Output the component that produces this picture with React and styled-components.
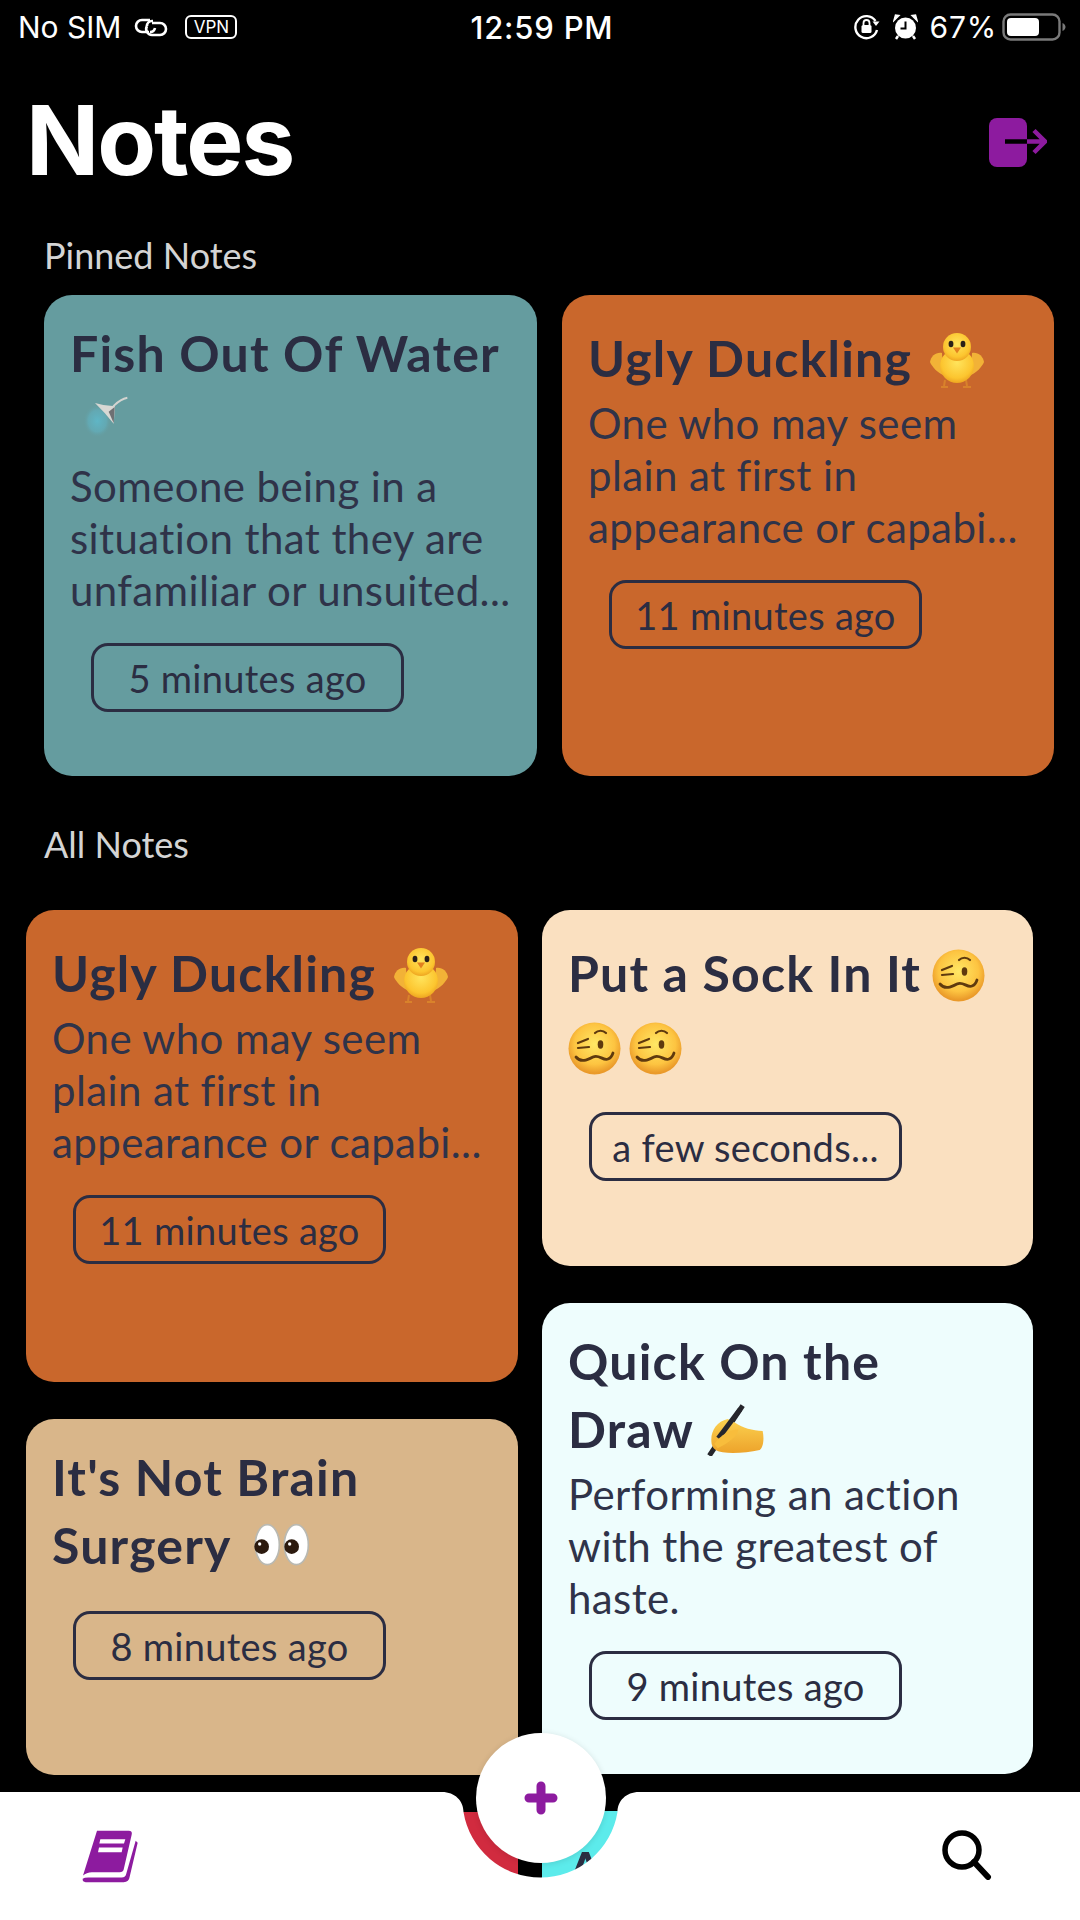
import React from 'react';
import styled, { createGlobalStyle } from 'styled-components';

const GlobalStyle = createGlobalStyle`
  html, body {
    margin: 0;
    padding: 0;
    background: #000;
  }
  * {
    box-sizing: border-box;
  }
`;

const Page = styled.div`
  position: relative;
  width: 1080px;
  height: 1920px;
  overflow: hidden;
  background: #000;
  font-family: Lato, 'Open Sans', sans-serif;
  color: #2b2d42;
`;

const StatusBar = styled.div`
  display: grid;
  grid-template-columns: 1fr auto 1fr;
  align-items: center;
  height: 54px;
  padding: 0 14px 0 18px;
  font-family: Inter, 'Liberation Sans', sans-serif;
  font-size: 30px;
  color: #fff;
`;

const StatusGroup = styled.div`
  display: flex;
  align-items: center;
  justify-content: ${props => (props.$end ? 'flex-end' : 'flex-start')};
  gap: 12px;
`;

const Percent = styled.span`
  margin-right: -7px;
  letter-spacing: 0.8px;
`;

const Time = styled.div`
  font-size: 31px;
  font-weight: 500;
  letter-spacing: 0.8px;
`;

const VpnBox = styled.span`
  display: inline-flex;
  align-items: center;
  justify-content: center;
  width: 52px;
  height: 24px;
  margin-left: 4px;
  border: 2px solid #fff;
  border-radius: 6px;
  font-size: 17px;
`;

const Header = styled.div`
  display: flex;
  align-items: center;
  justify-content: space-between;
  height: 116px;
  padding: 0 33px 0 26px;
  margin-top: 28px;
`;

const Heading = styled.h1`
  margin: 0;
  font-family: Inter, 'Liberation Sans', sans-serif;
  font-size: 96px;
  font-weight: 700;
  letter-spacing: -2px;
  color: #fff;
`;

const LogoutButton = styled.div`
  display: flex;
  margin-top: 6px;
`;

const SectionLabel = styled.div`
  height: 44px;
  line-height: 44px;
  margin: ${props => props.$margin};
  padding-left: 44px;
  font-size: 36px;
  color: #d4d4d4;
`;

const PinnedRow = styled.div`
  display: grid;
  grid-template-columns: 493px 492px;
  gap: 25px;
  padding-left: 44px;
`;

const Masonry = styled.div`
  display: grid;
  grid-template-columns: 492px 491px;
  gap: 24px;
  padding-left: 26px;
`;

const Column = styled.div`
  display: flex;
  flex-direction: column;
  gap: 37px;
`;

const Card = styled.div`
  min-height: ${props => props.$height}px;
  padding: 29px 22px 0 26px;
  border-radius: 28px;
  background: ${props => props.$color};
`;

const Title = styled.div`
  font-size: 50px;
  font-weight: 700;
  line-height: 58px;
  letter-spacing: 1.2px;
  color: #2b2d42;
`;

const Body = styled.div`
  font-size: 42px;
  line-height: 52px;
  letter-spacing: 0.4px;
  color: #2f3349;
`;

const TimePill = styled.div`
  display: flex;
  align-items: center;
  justify-content: center;
  width: 313px;
  height: 69px;
  margin: 27px 0 0 21px;
  border: 3px solid #2b2d42;
  border-radius: 17px;
  font-size: 38px;
  letter-spacing: 0.3px;
  white-space: nowrap;
`;

// sized box so a line with an emoji in it gets the taller line box of the app
const EmojiSlot = styled.span`
  display: inline-block;
  overflow: hidden;
  height: ${props => props.$line || 73}px;
  margin: ${props => props.$margin || '0'};
  font-size: 0;
  line-height: ${props => props.$line || 73}px;
  vertical-align: -20px;

  svg {
    vertical-align: middle;
  }
`;

const TabBar = styled.div`
  position: absolute;
  left: 0;
  right: 0;
  bottom: 0;
  display: flex;
  justify-content: space-between;
  height: 128px;
  padding: 38px 88px 0 82px;
`;

const BarShape = styled.svg`
  position: absolute;
  left: 0;
  top: 0;
  width: 1080px;
  height: 128px;
`;

const TabIcon = styled.svg`
  position: relative;
  display: block;
`;

const Fab = styled.button`
  position: absolute;
  left: 476px;
  bottom: 57px;
  display: flex;
  align-items: center;
  justify-content: center;
  width: 130px;
  height: 130px;
  padding: 0;
  border: 0;
  border-radius: 50%;
  background: #fff;
  box-shadow: 0 1px 6px rgba(0, 0, 0, 0.12);
`;

const PURPLE = '#8d1b9f';

const LinkIcon = () => (
  <svg width="36" height="22" viewBox="0 0 36 22" fill="none" stroke="#fff" strokeWidth="2.6">
    <path d="M17 4H9a6 6 0 0 0 0 12h7" />
    <path d="M14 10a5 5 0 0 1 5-5h1" />
    <path d="M19 7h8a6 6 0 0 1 0 12h-8a6 6 0 0 1-5-9" />
    <path d="M22 12a5 5 0 0 1-5 4" />
  </svg>
);

const RotationLockIcon = () => (
  <svg width="28" height="26" viewBox="0 0 28 26" fill="none">
    <path d="M22.5 7A11 11 0 1 0 24 16" stroke="#fff" strokeWidth="2.4" />
    <path d="M19.5 7.5h7l-3.5 4.5z" fill="#fff" />
    <rect x="8.5" y="11" width="10" height="8" rx="1.5" fill="#fff" />
    <path d="M10.5 11V9a3 3 0 0 1 6 0v2" stroke="#fff" strokeWidth="1.8" />
  </svg>
);

const AlarmIcon = () => (
  <svg width="25" height="26" viewBox="0 0 25 26">
    <circle cx="12.5" cy="14" r="10.5" fill="#fff" />
    <path d="M1 6.5 6 1.5 2.500 1z M24 6.500 19 1.500 22.500 1z" fill="#fff" stroke="#fff" strokeWidth="1.500" />
    <path d="M12.5 7.500V14.500H7.500" fill="none" stroke="#000" strokeWidth="2" />
    <path d="M5 22 3 25M20 22l2 3" stroke="#fff" strokeWidth="2.500" />
  </svg>
);

const BatteryIcon = () => (
  <svg width="64" height="28" viewBox="0 0 64 28">
    <rect x="1.500" y="1.500" width="56" height="25" rx="7" fill="none" stroke="#7a7a7a" strokeWidth="2.400" />
    <rect x="5" y="5" width="32" height="18" rx="4" fill="#fff" />
    <path d="M60.500 10c2 1 3 2.500 3 4s-1 3-3 4z" fill="#7a7a7a" />
  </svg>
);

const LogoutIcon = () => (
  <svg width="58" height="50" viewBox="0 0 58 50" fill="none">
    <rect x="0" y="0" width="38" height="49" rx="8" fill={PURPLE} />
    <path d="M16 23.500H38" stroke="#000" strokeWidth="4.500" />
    <path d="M38 23.500H54M45 12.500 56 23.500 45 34.500" stroke={PURPLE} strokeWidth="4.500" />
  </svg>
);

const Chick = () => (
  <svg width="54" height="56" viewBox="0 0 54 56">
    <defs>
      <radialGradient id="chickBody" cx="50%" cy="40%" r="65%">
        <stop offset="0%" stopColor="#ffe45c" />
        <stop offset="70%" stopColor="#fcc52f" />
        <stop offset="100%" stopColor="#e99a1c" />
      </radialGradient>
    </defs>
    <path d="M15 48l-1 6M11 55h7M36 48l1 6M33 55h8" stroke="#d9822b" strokeWidth="2" fill="none" />
    <path d="M12 21C6 20 1 24 0 30c2 5 8 11 13 13z" fill="#f2b237" />
    <path d="M42 21c6-1 11 3 12 9-2 5-8 11-13 13z" fill="#f2b237" />
    <ellipse cx="27" cy="34" rx="17" ry="17" fill="url(#chickBody)" />
    <circle cx="27" cy="15" r="14" fill="url(#chickBody)" />
    <ellipse cx="21" cy="12" rx="2.400" ry="3.200" fill="#2a2018" />
    <ellipse cx="33" cy="12" rx="2.400" ry="3.200" fill="#2a2018" />
    <path d="M23 15.500h8l-4 6z" fill="#e2811f" />
  </svg>
);

const Woozy = () => (
  <svg width="53" height="53" viewBox="0 0 53 53" fill="none">
    <defs>
      <radialGradient id="woozyFace" cx="50%" cy="42%" r="55%">
        <stop offset="0%" stopColor="#ffe865" />
        <stop offset="70%" stopColor="#fdc441" />
        <stop offset="100%" stopColor="#ea9a2a" />
      </radialGradient>
    </defs>
    <circle cx="26.500" cy="26.500" r="26" fill="url(#woozyFace)" />
    <path d="M10 21l10-4M10 26l11-1" stroke="#5f3a0e" strokeWidth="2.200" strokeLinecap="round" />
    <ellipse cx="32.500" cy="22.500" rx="2.800" ry="4.200" fill="#5f3a0e" />
    <path d="M27 11c3-3 8-3 11 0" stroke="#5f3a0e" strokeWidth="2.200" strokeLinecap="round" />
    <path d="M8 35c5 6 11 3 17 0s10 4 15 2c3-1 4-3 5-6" stroke="#5f3a0e" strokeWidth="2.800" strokeLinecap="round" />
  </svg>
);

const WritingHand = () => (
  <svg width="60" height="54" viewBox="75 10 180 160" fill="none">
    <defs>
      <linearGradient id="handSkin" x1="0" y1="0" x2="0" y2="1">
        <stop offset="0%" stopColor="#fcd250" />
        <stop offset="100%" stopColor="#eda32b" />
      </linearGradient>
    </defs>
    <path d="M185 20 L85 170" stroke="#26262c" strokeWidth="15" />
    <path d="M92 135C86 100 105 68 140 60L160 70C185 88 215 95 245 96C250 120 247 145 236 153C200 160 160 165 125 160C105 156 96 150 92 135Z" fill="url(#handSkin)" />
    <path d="M178 30 L112 118" stroke="#26262c" strokeWidth="15" />
    <path d="M100 135C120 105 155 90 172 92C170 112 140 132 110 148Z" fill="#f8bd3c" />
  </svg>
);

const Eyes = () => (
  <svg width="56" height="50" viewBox="45 40 168 130">
    <ellipse cx="85" cy="104" rx="36" ry="60" fill="#fff" stroke="#b9b9b2" strokeWidth="5" />
    <ellipse cx="172" cy="104" rx="36" ry="60" fill="#fff" stroke="#b9b9b2" strokeWidth="5" />
    <circle cx="68" cy="110" r="22" fill="#2c1a0e" />
    <circle cx="158" cy="110" r="22" fill="#2c1a0e" />
    <circle cx="62" cy="102" r="5" fill="#fff" />
    <circle cx="152" cy="102" r="5" fill="#fff" />
  </svg>
);

const FishSpray = () => (
  <svg width="70" height="60" viewBox="0 0 210 180">
    <defs>
      <radialGradient id="sprayFade" cx="50%" cy="50%" r="50%">
        <stop offset="0%" stopColor="#5fb6c6" />
        <stop offset="65%" stopColor="#62aebb" stopOpacity="0.7" />
        <stop offset="100%" stopColor="#659c9f" stopOpacity="0" />
      </radialGradient>
    </defs>
    <ellipse cx="82" cy="90" rx="42" ry="50" fill="url(#sprayFade)" />
    <path d="M75 36 100 42 135 46 131 98 104 66z" fill="#d8d8d4" />
    <path d="M116 62 134 48 131 96z" fill="#6e7073" />
    <path d="M130 46C140 36 150 24 172 20" fill="none" stroke="#d4d4d0" strokeWidth="6" />
  </svg>
);

const BookIcon = () => (
  <TabIcon width="56" height="53" viewBox="65 60 168 158">
    <path d="M110 62H205Q217 62 214 74L190 178Q188 186 178 186H95Q78 187 68 196Z" fill={PURPLE} />
    <path d="M120 87H195L191 100H117ZM116 112H187L184 126H113Z" fill="#fff" />
    <path d="M226 92 232 98 208 200Q206 216 190 216H76Q66 216 67 206Q72 202 84 202H184Q196 202 198 190Z" fill={PURPLE} />
  </TabIcon>
);

const SearchIcon = () => (
  <TabIcon width="50" height="50" viewBox="0 0 50 50" fill="none" stroke="#000">
    <circle cx="20" cy="20" r="17" strokeWidth="5.500" />
    <path d="M32 32 46 47" strokeWidth="6" strokeLinecap="round" />
  </TabIcon>
);

const PlusIcon = () => (
  <svg width="34" height="34" viewBox="0 0 34 34">
    <path d="M17 5V29M5 17H29" stroke={PURPLE} strokeWidth="9" strokeLinecap="round" />
  </svg>
);

const NoteCard = ({ color, height, title, body, ago }) => (
  <Card $color={color} $height={height}>
    <Title>{title}</Title>
    {body && <Body>{body}</Body>}
    {ago && <TimePill>{ago}</TimePill>}
  </Card>
);

const duckTitle = (
  <>
    Ugly Duckling{' '}
    <EmojiSlot $margin="0 0 0 5px">
      <Chick />
    </EmojiSlot>
  </>
);
const duckBody = 'One who may seem plain at first in appearance or capabi...';

function App() {
  return (
    <Page>
      <GlobalStyle />
      <StatusBar>
        <StatusGroup>
          <span>No SIM</span>
          <LinkIcon />
          <VpnBox>VPN</VpnBox>
        </StatusGroup>
        <Time>12:59 PM</Time>
        <StatusGroup $end>
          <RotationLockIcon />
          <AlarmIcon />
          <Percent>67%</Percent>
          <BatteryIcon />
        </StatusGroup>
      </StatusBar>

      <Header>
        <Heading>Notes</Heading>
        <LogoutButton>
          <LogoutIcon />
        </LogoutButton>
      </Header>

      <SectionLabel $margin="35px 0 18px">Pinned Notes</SectionLabel>
      <PinnedRow>
        <NoteCard
          color="#659c9f"
          height={481}
          title={
            <>
              Fish Out Of Water{' '}
              <EmojiSlot $line={78}>
                <FishSpray />
              </EmojiSlot>
            </>
          }
          body="Someone being in a situation that they are unfamiliar or unsuited..."
          ago="5 minutes ago"
        />
        <NoteCard color="#c9672c" height={481} title={duckTitle} body={duckBody} ago="11 minutes ago" />
      </PinnedRow>

      <SectionLabel $margin="46px 0 44px">All Notes</SectionLabel>
      <Masonry>
        <Column>
          <NoteCard color="#c9672c" height={472} title={duckTitle} body={duckBody} ago="11 minutes ago" />
          <NoteCard
            color="#d9b68a"
            height={356}
            title={
              <>
                It's Not Brain Surgery{' '}
                <EmojiSlot $line={78} $margin="0 0 0 10px">
                  <Eyes />
                </EmojiSlot>
              </>
            }
            ago="8 minutes ago"
          />
          <NoteCard color="#d12b3f" height={300} />
        </Column>
        <Column>
          <NoteCard
            color="#fae0c0"
            height={356}
            title={
              <>
                Put a Sock In It{' '}
                <EmojiSlot $margin="0 8px 0 -2px">
                  <Woozy />
                </EmojiSlot>
                <EmojiSlot $margin="0 8px 0 0">
                  <Woozy />
                </EmojiSlot>
                <EmojiSlot>
                  <Woozy />
                </EmojiSlot>
              </>
            }
            ago="a few seconds..."
          />
          <NoteCard
            color="#eefdfd"
            height={471}
            title={
              <>
                Quick On the Draw{' '}
                <EmojiSlot $line={78}>
                  <WritingHand />
                </EmojiSlot>
              </>
            }
            body="Performing an action with the greatest of haste."
            ago="9 minutes ago"
          />
          <NoteCard color="#5cebeb" height={300} title="AA" />
        </Column>
      </Masonry>

      <TabBar>
        <BarShape viewBox="0 0 1080 128">
          <path
            d="M0 0H442C455 0 463.500 9 463.500 20A78 78 0 0 0 617.500 20C617.500 9 626 0 639 0H1080V128H0Z"
            fill="#fff"
          />
        </BarShape>
        <BookIcon />
        <SearchIcon />
        <Fab>
          <PlusIcon />
        </Fab>
      </TabBar>
    </Page>
  );
}

export default App;
